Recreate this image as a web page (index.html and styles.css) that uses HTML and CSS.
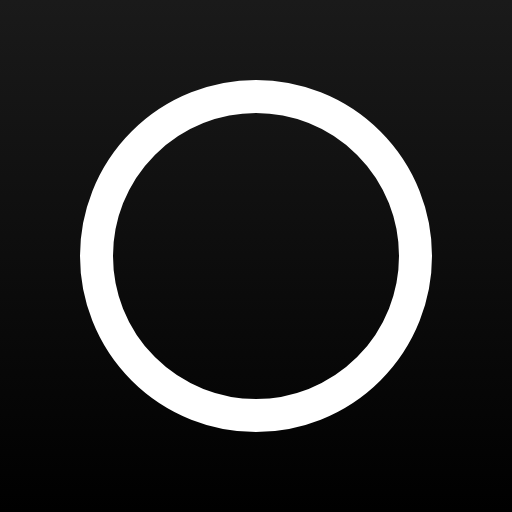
FILE: index.html
```html
<!DOCTYPE html>
<html lang="en">

<head>
  <meta charset="UTF-8">
  <meta name="viewport" content="width=device-width, initial-scale=1.0">
  <title>Ring</title>
  <link rel="stylesheet" href="styles.css">
</head>

<body>
  <div class="icon">
    <svg class="ring" width="512" height="512" viewBox="0 0 512 512">
      <circle cx="256" cy="256" r="159.5" fill="none" stroke="#fff" stroke-width="33" />
    </svg>
  </div>
</body>

</html>
```

FILE: styles.css
```css
html, body {
  margin: 0;
  padding: 0;
}
.icon {
  width: 512px;
  height: 512px;
  background: linear-gradient(to bottom, #1a1a1a, #000);
}
.ring {
  display: block;
}
```
